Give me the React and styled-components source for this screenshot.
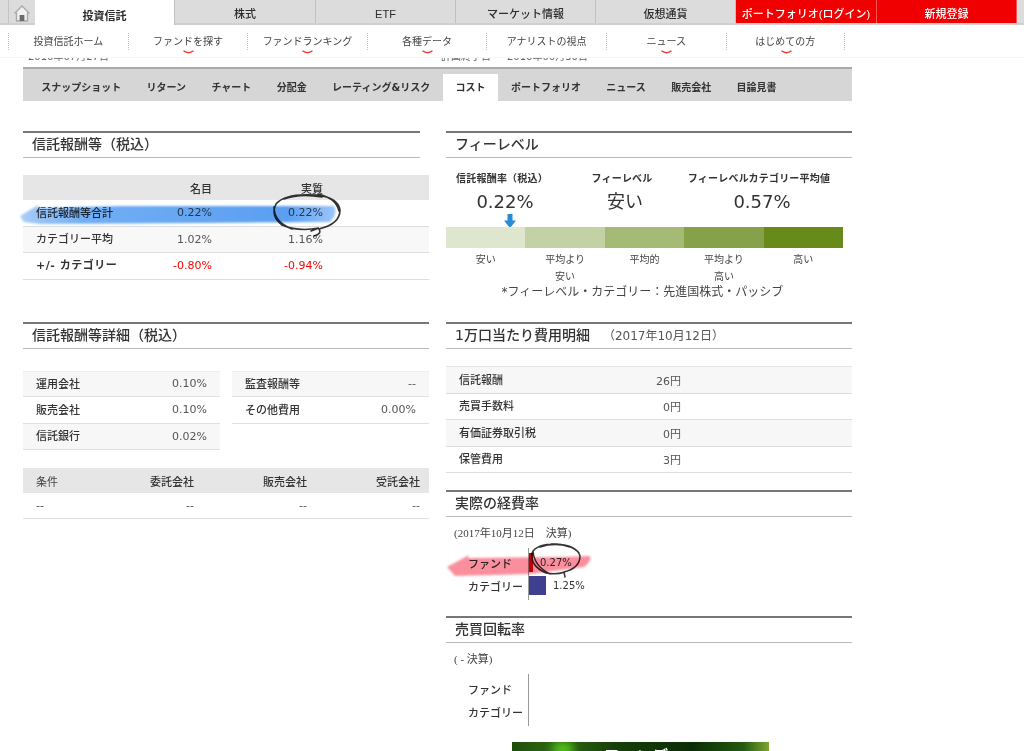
import styled, { createGlobalStyle } from "styled-components";

const SANS = `"DejaVu Sans", "Noto Sans CJK JP", sans-serif`;
const JP = `"Noto Sans CJK JP", sans-serif`;

const GlobalStyle = createGlobalStyle`
    html, body {
        margin: 0;
        padding: 0;
        background: #fff;
        overflow: hidden;
    }
    body {
        font-family: ${SANS};
        color: #333;
    }
`;

const topTabs = [
    { label: "投資信託", width: 140, active: true },
    { label: "株式", width: 141 },
    { label: "ETF", width: 140 },
    { label: "マーケット情報", width: 140 },
    { label: "仮想通貨", width: 140 },
    { label: "ポートフォリオ(ログイン)", width: 141, red: true },
    { label: "新規登録", width: 140, red: true },
];

const subLinks = [
    { label: "投資信託ホーム" },
    { label: "ファンドを探す", menu: true },
    { label: "ファンドランキング", menu: true },
    { label: "各種データ", menu: true },
    { label: "アナリストの視点" },
    { label: "ニュース", menu: true },
    { label: "はじめての方", menu: true },
];

const sectionTabs = ["スナップショット", "リターン", "チャート", "分配金", "レーティング&リスク", "コスト", "ポートフォリオ", "ニュース", "販売会社", "目論見書"];

const feeRows = [
    { label: "信託報酬等合計", a: "0.22%", b: "0.22%" },
    { label: "カテゴリー平均", a: "1.02%", b: "1.16%", shaded: true },
    { label: "+/- カテゴリー", a: "-0.80%", b: "-0.94%", red: true, bold: true },
];

const tiers = [
    { label: "安い", color: "#dfe6cf" },
    { label: "平均より\n安い", color: "#c3d2a5" },
    { label: "平均的", color: "#a4ba75" },
    { label: "平均より\n高い", color: "#85a24a" },
    { label: "高い", color: "#678a1b" },
];

const costRows = [
    { label: "信託報酬", value: "26円", shaded: true },
    { label: "売買手数料", value: "0円" },
    { label: "有価証券取引税", value: "0円", shaded: true },
    { label: "保管費用", value: "3円" },
];

const HomeIcon = () => (
    <svg width="16" height="17" viewBox="0 0 16 17">
        <path d="M8 1 L1 8 L2.5 8 L2.5 16 L13.5 16 L13.5 8 L15 8 Z" fill="#f1f1f1" stroke="#a9a9a9" strokeWidth="1.4" strokeLinejoin="round" />
        <rect x="5.6" y="10" width="4.8" height="6" fill="#6b6b6b" />
    </svg>
);

const Smile = () => (
    <SmileMark width="11" height="4" viewBox="0 0 11 4">
        <path d="M0.5 0.8 Q5.5 4.6 10.5 0.8" fill="none" stroke="#f0353b" strokeWidth="1.4" />
    </SmileMark>
);

const App = () => {
    return (
        <Screen>
            <GlobalStyle />
            <TopNav>
                <EdgeCell />
                <HomeCell><HomeIcon /></HomeCell>
                {topTabs.map((tab) => (
                    <TopTab key={tab.label} $width={tab.width} $active={tab.active} $red={tab.red}>{tab.label}</TopTab>
                ))}
            </TopNav>
            <SubNav>
                {subLinks.map((link) => (
                    <SubLink key={link.label}>
                        {link.label}
                        {link.menu && <Smile />}
                    </SubLink>
                ))}
            </SubNav>
            <DateStrip>
                <DateText $width={413}>2016年07月27日</DateText>
                <DateText $width={66}>計画終了日</DateText>
                <DateText>2016年06月30日</DateText>
            </DateStrip>
            <Page>
                <SectionTabs>
                    {sectionTabs.map((tab) => (
                        <SectionTab key={tab} $active={tab === "コスト"}>{tab}</SectionTab>
                    ))}
                </SectionTabs>
                <Columns>
                    <div>
                        <Heading $short>信託報酬等（税込）</Heading>
                        <FeeTable>
                            <FeeHead>
                                <span />
                                <HeadCell>名目</HeadCell>
                                <HeadCell>実質</HeadCell>
                            </FeeHead>
                            {feeRows.map((row) => (
                                <FeeRow key={row.label} $shaded={row.shaded}>
                                    <RowLabel $bold={row.bold}>{row.label}</RowLabel>
                                    <Value $red={row.red}>{row.a}</Value>
                                    <Value $red={row.red}>{row.b}</Value>
                                </FeeRow>
                            ))}
                            <Marker width="340" height="50" viewBox="15 190 340 50" $left={-8} $top={15}>
                                <defs>
                                    <linearGradient id="blueInk" x1="0" x2="1" y1="0" y2="0">
                                        <stop offset="0" stopColor="#a9cdf8" />
                                        <stop offset="0.2" stopColor="#72aef4" />
                                        <stop offset="0.85" stopColor="#5a9ff1" />
                                        <stop offset="1" stopColor="#9cc6f8" />
                                    </linearGradient>
                                    <filter id="softBlue"><feGaussianBlur stdDeviation="1" /></filter>
                                </defs>
                                <path d="M20 216 L38 205 L37 208 L120 206 L334 206 Q338 214 330 222 L200 223 L40 224 L24 222 Z" fill="url(#blueInk)" filter="url(#softBlue)" />
                            </Marker>
                            <Marker width="340" height="50" viewBox="15 190 340 50" $left={-8} $top={15}>
                                <path d="M314 236 Q322 234 319 229 Q340 224 340 210 Q338 197 316 195 Q285 193 276 204 Q270 216 282 225 Q298 232 319 228 L311 231 M318 194 Q336 198 339 211 M274 207 Q274 222 292 229 M284 199 Q300 193 322 197" fill="none" stroke="#333" strokeWidth="1.6" strokeLinecap="round" />
                            </Marker>
                        </FeeTable>
                        <Heading $gap={42}>信託報酬等詳細（税込）</Heading>
                        <DetailGrid>
                            <div>
                                <DetailRow $shaded><RowLabel>運用会社</RowLabel><Value>0.10%</Value></DetailRow>
                                <DetailRow><RowLabel>販売会社</RowLabel><Value>0.10%</Value></DetailRow>
                                <DetailRow $shaded><RowLabel>信託銀行</RowLabel><Value>0.02%</Value></DetailRow>
                            </div>
                            <div>
                                <DetailRow $shaded><RowLabel>監査報酬等</RowLabel><Value>--</Value></DetailRow>
                                <DetailRow><RowLabel>その他費用</RowLabel><Value>0.00%</Value></DetailRow>
                            </div>
                        </DetailGrid>
                        <TermsHead>
                            <TermsLabel>条件</TermsLabel>
                            <HeadCell>委託会社</HeadCell>
                            <HeadCell>販売会社</HeadCell>
                            <HeadCell>受託会社</HeadCell>
                        </TermsHead>
                        <TermsRow>
                            <TermsLabel>--</TermsLabel>
                            <Value>--</Value>
                            <Value>--</Value>
                            <Value>--</Value>
                        </TermsRow>
                    </div>
                    <div>
                        <Heading>フィーレベル</Heading>
                        <LevelGrid>
                            <LevelLabel>信託報酬率（税込）</LevelLabel>
                            <LevelLabel>フィーレベル</LevelLabel>
                            <LevelLabel>フィーレベルカテゴリー平均値</LevelLabel>
                            <LevelValue>0.22%</LevelValue>
                            <LevelValue>安い</LevelValue>
                            <LevelValue>0.57%</LevelValue>
                        </LevelGrid>
                        <ArrowRow>
                            <svg width="12" height="14" viewBox="0 0 12 14">
                                <path d="M3.5 0 H8.5 V6.5 H12 L6 14 L0 6.5 H3.5 Z" fill="#2a8ad4" />
                            </svg>
                        </ArrowRow>
                        <TierBar>
                            {tiers.map((tier) => <Tier key={tier.label} $color={tier.color} />)}
                        </TierBar>
                        <TierLabels>
                            {tiers.map((tier) => <TierLabel key={tier.label}>{tier.label}</TierLabel>)}
                        </TierLabels>
                        <Note>*フィーレベル・カテゴリー：先進国株式・パッシブ</Note>
                        <Heading $gap={23}>1万口当たり費用明細<HeadingDate>（2017年10月12日）</HeadingDate></Heading>
                        <CostTable>
                            {costRows.map((row) => (
                                <CostRow key={row.label} $shaded={row.shaded}>
                                    <RowLabel>{row.label}</RowLabel>
                                    <Value>{row.value}</Value>
                                </CostRow>
                            ))}
                        </CostTable>
                        <Heading $gap={17}>実際の経費率</Heading>
                        <PeriodText>(2017年10月12日　決算)</PeriodText>
                        <BarChart>
                            <BarRow>
                                <BarLabel>ファンド</BarLabel>
                                <BarTrack>
                                    <Bar $width={4} $color="#c8000a" />
                                    <BarValue>0.27%</BarValue>
                                </BarTrack>
                            </BarRow>
                            <BarRow>
                                <BarLabel>カテゴリー</BarLabel>
                                <BarTrack>
                                    <Bar $width={17} $color="#3f3f8f" />
                                    <BarValue>1.25%</BarValue>
                                </BarTrack>
                            </BarRow>
                            <Marker width="160" height="45" viewBox="440 538 160 45" $left={-6} $top={-10}>
                                <defs>
                                    <filter id="softPink"><feGaussianBlur stdDeviation="1" /></filter>
                                </defs>
                                <path d="M447 567 L469 555 L468 558 L560 557 L590 556 Q592 561 584 567 L530 574 L455 576 Z" fill="#f98f9d" filter="url(#softPink)" />
                            </Marker>
                            <Marker width="160" height="45" viewBox="440 538 160 45" $left={-6} $top={-10}>
                                <path d="M565 577 L564 572 Q580 568 580 556 Q577 545 556 544 Q536 544 532 553 Q530 566 546 573 Q556 575 565 572 M551 544 Q572 544 579 553 M533 551 Q534 566 550 574 M540 547 Q555 542 570 547" fill="none" stroke="#333" strokeWidth="1.5" strokeLinecap="round" />
                            </Marker>
                        </BarChart>
                        <Heading $gap={16}>売買回転率</Heading>
                        <PeriodText>( - 決算)</PeriodText>
                        <BarChart>
                            <BarRow><BarLabel>ファンド</BarLabel><BarTrack /></BarRow>
                            <BarRow><BarLabel>カテゴリー</BarLabel><BarTrack /></BarRow>
                        </BarChart>
                        <Banner>
                            <BannerGlow $left={40} />
                            <BannerTitle>ファンディ</BannerTitle>
                        </Banner>
                    </div>
                </Columns>
            </Page>
        </Screen>
    );
};

const Screen = styled.div`
    width: 1024px;
    height: 751px;
    overflow: hidden;
    background: #fff;
    filter: blur(0.3px);
`;

const TopNav = styled.nav`
    display: flex;
    height: 25px;
    background: #dcdcdc;
    border-bottom: 2px solid #cfcfcf;
    box-sizing: border-box;
`;

const EdgeCell = styled.div`
    width: 9px;
    border-right: 1px solid #c4c4c4;
    box-sizing: border-box;
`;

const HomeCell = styled.div`
    width: 26px;
    display: flex;
    align-items: flex-end;
    justify-content: center;
    padding-bottom: 1px;
    box-sizing: border-box;
`;

const TopTab = styled.div`
    width: ${(p) => p.$width}px;
    height: ${(p) => (p.$active ? "25px" : "23px")};
    flex-shrink: 0;
    box-sizing: border-box;
    display: flex;
    align-items: flex-end;
    justify-content: center;
    padding-bottom: 2px;
    font-family: "Liberation Sans", ${JP};
    font-size: 11px;
    line-height: 14px;
    font-weight: ${(p) => (p.$active ? 700 : 500)};
    color: ${(p) => (p.$red ? "#fff" : "#2c2c2c")};
    background: ${(p) => (p.$active ? "#fff" : p.$red ? "#f00000" : "#dcdcdc")};
    border-right: 1px solid ${(p) => (p.$red ? "#f55" : "#c0c0c0")};
    white-space: nowrap;
`;

const SubNav = styled.div`
    display: flex;
    height: 33px;
    padding: 8px 0 0 8px;
    box-sizing: border-box;
    border-bottom: 1px solid #f6f6f6;
`;

const SubLink = styled.div`
    position: relative;
    width: 119.6px;
    height: 17px;
    box-sizing: border-box;
    border-left: 1px dotted #bbb;
    font-size: 10px;
    line-height: 17px;
    text-align: center;
    color: #444;
    white-space: nowrap;

    &:last-child {
        border-right: 1px dotted #bbb;
    }
`;

const SmileMark = styled.svg`
    position: absolute;
    left: 54px;
    top: 17px;
    display: block;
`;

const DateStrip = styled.div`
    display: flex;
    height: 9px;
    padding-left: 28px;
    overflow: hidden;
`;

const DateText = styled.div`
    width: ${(p) => (p.$width ? `${p.$width}px` : "auto")};
    margin-top: -7px;
    font-size: 10px;
    line-height: 12px;
    color: #666;
    white-space: nowrap;
`;

const Page = styled.main`
    width: 829px;
    margin-left: 23px;
`;

const SectionTabs = styled.div`
    display: flex;
    align-items: flex-end;
    height: 34px;
    padding-left: 5.5px;
    background: #d6d6d6;
    border-top: 2px solid #aaa;
    box-sizing: border-box;
`;

const SectionTab = styled.div`
    height: 27px;
    padding: 0 12.7px;
    font-size: 10px;
    font-weight: 700;
    line-height: 27px;
    color: #333;
    white-space: nowrap;
    background: ${(p) => (p.$active ? "#fff" : "transparent")};
`;

const Columns = styled.div`
    display: grid;
    grid-template-columns: 406px 406px;
    column-gap: 17px;
    padding-top: 30px;
`;

const Heading = styled.h2`
    width: ${(p) => (p.$short ? "397px" : "auto")};
    height: 27px;
    margin: ${(p) => p.$gap || 0}px 0 0;
    padding-left: 9px;
    box-sizing: border-box;
    border-top: 2px solid #777;
    border-bottom: 1px solid #bbb;
    font-size: 14px;
    font-weight: 500;
    line-height: 22px;
    color: #333;
    white-space: nowrap;
`;

const HeadingDate = styled.span`
    margin-left: 13px;
    font-size: 12px;
    font-weight: 400;
    color: #555;
`;

const FeeTable = styled.div`
    position: relative;
    margin-top: 17px;
`;

const FeeHead = styled.div`
    display: grid;
    grid-template-columns: 100px 89px 111px 1fr;
    align-items: center;
    height: 25px;
    background: #e6e6e6;
`;

const HeadCell = styled.div`
    font-size: 11px;
    font-weight: 500;
    text-align: right;
    color: #333;
    white-space: nowrap;
`;

const FeeRow = styled.div`
    display: grid;
    grid-template-columns: 100px 89px 111px 1fr;
    align-items: center;
    height: 26.5px;
    box-sizing: border-box;
    background: ${(p) => (p.$shaded ? "#f8f8f8" : "#fff")};
    border-bottom: 1px solid #ddd;
`;

const RowLabel = styled.div`
    padding-left: 13px;
    font-family: ${(p) => (p.$bold ? SANS : JP)};
    font-size: 11px;
    line-height: 14px;
    margin-top: ${(p) => (p.$bold ? "0" : "-2px")};
    font-weight: ${(p) => (p.$bold ? 700 : 500)};
    letter-spacing: ${(p) => (p.$bold ? "0.5px" : "0")};
    color: #333;
    white-space: nowrap;
`;

const Value = styled.div`
    font-size: 11px;
    text-align: right;
    color: ${(p) => (p.$red ? "#f00" : "#555")};
`;

const Marker = styled.svg`
    position: absolute;
    left: ${(p) => p.$left}px;
    top: ${(p) => p.$top}px;
    mix-blend-mode: multiply;
    pointer-events: none;
`;

const DetailGrid = styled.div`
    display: grid;
    grid-template-columns: 197px 197px;
    column-gap: 12px;
    margin-top: 22px;
`;

const DetailRow = styled.div`
    display: grid;
    grid-template-columns: 1fr auto;
    align-items: center;
    height: 26.5px;
    padding-right: 13px;
    box-sizing: border-box;
    background: ${(p) => (p.$shaded ? "#f7f7f7" : "#fff")};
    border-bottom: 1px solid #e0e0e0;

    &:first-child {
        border-top: 1px solid #eee;
    }
`;

const TermsHead = styled.div`
    display: grid;
    grid-template-columns: 60px 111px 113px 113px;
    align-items: center;
    height: 25px;
    margin-top: 18px;
    background: #e6e6e6;
`;

const TermsRow = styled(TermsHead)`
    height: 26px;
    margin-top: 0;
    background: #fff;
    border-bottom: 1px solid #e0e0e0;
    box-sizing: border-box;
`;

const TermsLabel = styled.div`
    padding-left: 13px;
    font-size: 11px;
    color: #444;
`;

const LevelGrid = styled.div`
    display: grid;
    width: 386px;
    grid-template-columns: 112px 128px 146px;
    padding-top: 13px;
    justify-items: center;
`;

const LevelLabel = styled.div`
    height: 19px;
    font-size: 10px;
    font-weight: 700;
    line-height: 15px;
    letter-spacing: 0.2px;
    color: #333;
    white-space: nowrap;
`;

const LevelValue = styled.div`
    height: 24px;
    padding-left: 6px;
    font-size: 18px;
    line-height: 24px;
    color: #333;
`;

const ArrowRow = styled.div`
    display: flex;
    height: 13px;
    padding-left: 58px;
    svg {
        display: block;
    }
`;

const TierBar = styled.div`
    display: grid;
    grid-template-columns: repeat(5, 1fr);
    width: 397px;
    height: 21px;
`;

const Tier = styled.div`
    background: ${(p) => p.$color};
`;

const TierLabels = styled.div`
    display: grid;
    grid-template-columns: repeat(5, 1fr);
    width: 397px;
    padding-top: 4px;
`;

const TierLabel = styled.div`
    height: 33px;
    font-size: 10px;
    line-height: 16.5px;
    text-align: center;
    white-space: pre-line;
    color: #444;
`;

const Note = styled.div`
    width: 393px;
    font-size: 12px;
    line-height: 14px;
    text-align: center;
    color: #444;
    white-space: nowrap;
`;

const CostTable = styled.div`
    margin-top: 17px;
    border-top: 1px solid #e4e4e4;
`;

const CostRow = styled.div`
    display: grid;
    grid-template-columns: 150px 85px 1fr;
    align-items: center;
    height: 26.5px;
    box-sizing: border-box;
    background: ${(p) => (p.$shaded ? "#f7f7f7" : "#fff")};
    border-bottom: 1px solid #ddd;
`;

const PeriodText = styled.div`
    margin-top: 8px;
    padding-left: 8px;
    font-family: "Liberation Serif", ${JP};
    font-size: 11px;
    line-height: 16px;
    color: #444;
`;

const BarChart = styled.div`
    position: relative;
    margin-top: 7px;
    padding: 3px 0;
    width: 300px;
`;

const BarRow = styled.div`
    display: flex;
    height: 23px;
    align-items: center;
`;

const BarLabel = styled.div`
    width: 76px;
    padding-left: 22px;
    box-sizing: border-box;
    font-size: 11px;
    font-weight: 500;
    color: #333;
    white-space: nowrap;
`;

const BarTrack = styled.div`
    display: flex;
    align-items: center;
    height: 100%;
    margin-left: 6px;
    margin-top: -3px;
    margin-bottom: -3px;
    padding: 3px 0;
    box-sizing: content-box;
    border-left: 1px solid #999;
`;

const Bar = styled.div`
    width: ${(p) => p.$width}px;
    height: 19px;
    background: ${(p) => p.$color};
`;

const BarValue = styled.div`
    margin-left: 7px;
    font-size: 10px;
    color: #333;
`;

const Banner = styled.div`
    position: relative;
    width: 257px;
    height: 60px;
    margin: 16px 0 0 66px;
    overflow: hidden;
    background: linear-gradient(90deg, #1d4d0c 0%, #2f6b12 18%, #163f08 40%, #0c2c06 70%, #235a10 90%, #7fa52e 100%);
`;

const BannerGlow = styled.div`
    position: absolute;
    left: ${(p) => p.$left}px;
    top: 0;
    width: 22px;
    height: 14px;
    border-radius: 50%;
    background: #52c41a;
    filter: blur(4px);
`;

const BannerTitle = styled.div`
    position: relative;
    padding: 5px 0 0 92px;
    font-size: 16px;
    font-weight: 700;
    line-height: 20px;
    color: #fff;
    white-space: nowrap;
`;

export default App;
